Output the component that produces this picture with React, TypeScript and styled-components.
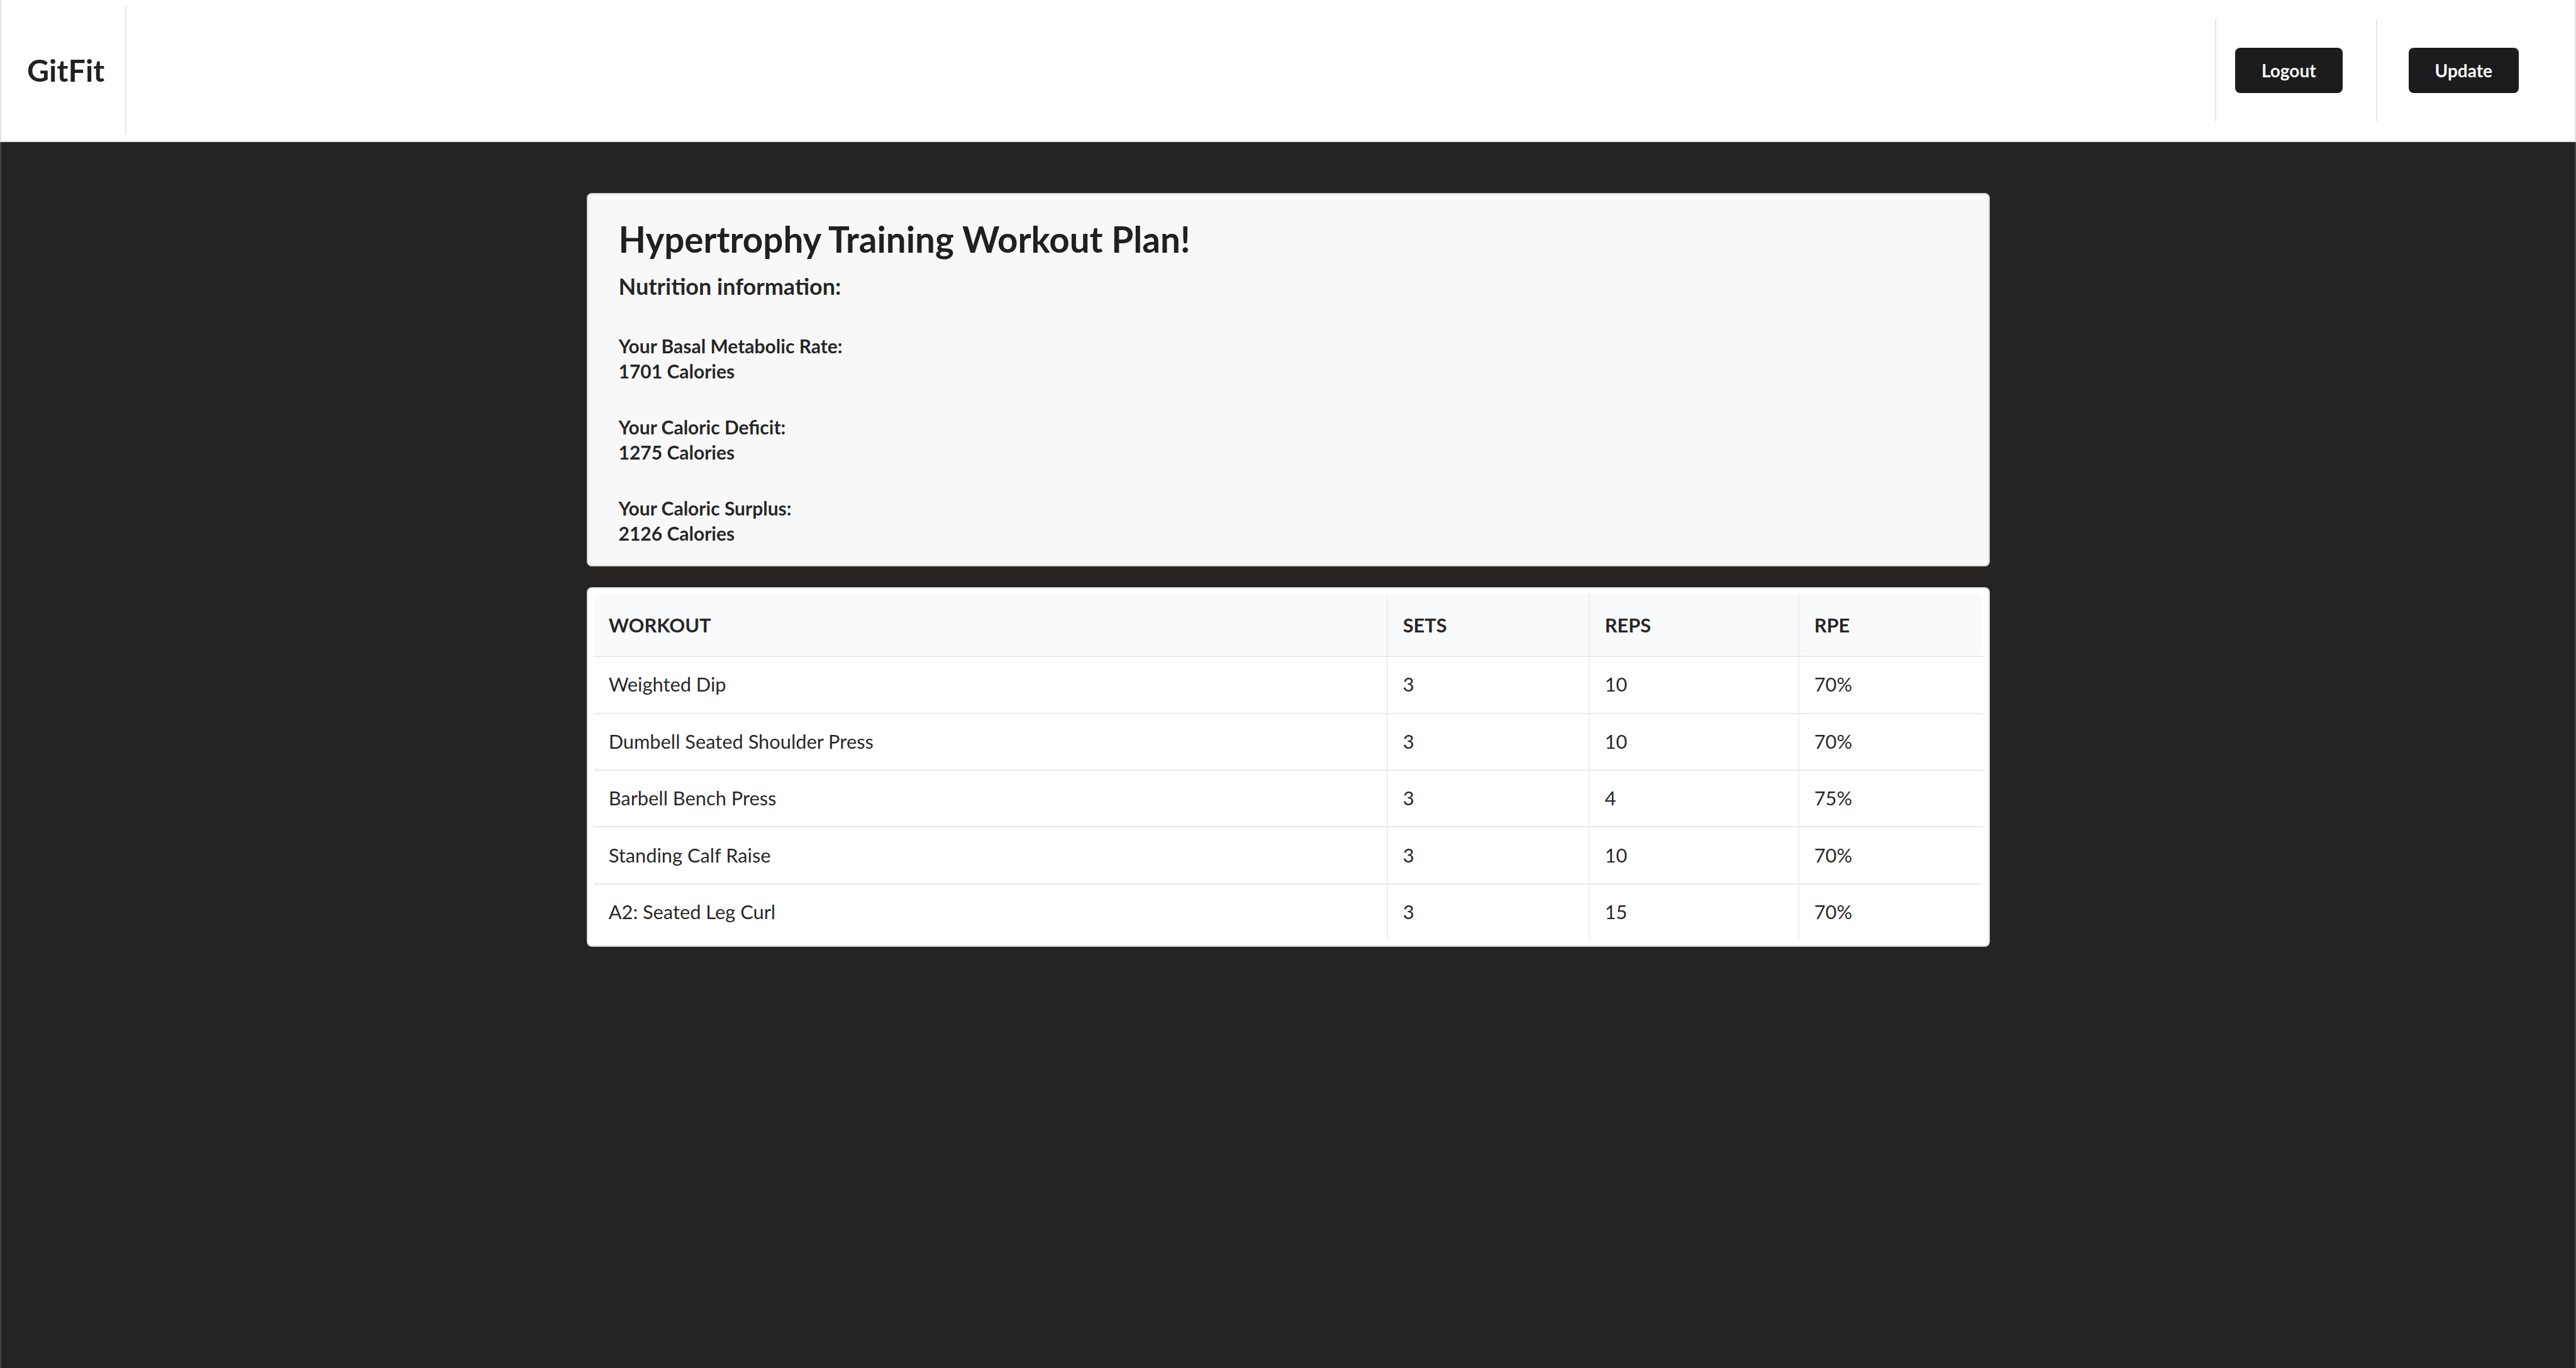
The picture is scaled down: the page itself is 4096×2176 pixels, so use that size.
import React from 'react';
import styled, { createGlobalStyle } from 'styled-components';

const GlobalStyle = createGlobalStyle`
  * {
    box-sizing: border-box;
  }
  html,
  body {
    margin: 0;
    padding: 0;
  }
  body {
    font-family: Lato, 'Helvetica Neue', Arial, Helvetica, sans-serif;
    font-size: 28px;
    line-height: 40px;
    color: rgba(0, 0, 0, 0.87);
    background: #252422;
  }
`;

const Page = styled.div`
  min-height: 2176px;
  display: flex;
  flex-direction: column;
  background: #252422;
`;

const Menu = styled.header`
  display: flex;
  align-items: stretch;
  height: 226px;
  background: #fff;
  border: 2px solid #e3e3e3;
  border-top: none;
`;

const Brand = styled.div`
  display: flex;
  align-items: center;
  width: 199px;
  margin: 10px 0 11px;
  padding-left: 41px;
  border-right: 2px solid #e6e6e6;
  font-size: 48.5px;
  font-weight: 700;
  line-height: 1;
  color: rgba(0, 0, 0, 0.87);
`;

const Spacer = styled.div`
  flex: 1;
`;

const MenuItem = styled.div<{ $left: number; $right: number }>`
  display: flex;
  align-items: center;
  margin: 30px 0 31px;
  padding: 0 ${p => p.$right}px 0 ${p => p.$left}px;
  border-left: 2px solid #e6e6e6;
`;

const Button = styled.button`
  height: 72px;
  padding: 0 42px;
  border: 0;
  border-radius: 8px;
  background: #1b1c1d;
  color: #fff;
  font-family: inherit;
  font-size: 28px;
  font-weight: 700;
  line-height: 1;
  cursor: pointer;
`;

const Main = styled.main`
  flex: 1;
  display: flex;
  flex-direction: column;
  align-items: center;
  gap: 33px;
  padding-top: 81px;
  border-left: 2px solid #474747;
  border-right: 2px solid #474747;
`;

const InfoCard = styled.section`
  width: 2231px;
  padding: 35px 49px 31px;
  background: #f8f8f8;
  border: 2px solid #d4d4d5;
  border-radius: 8px;
`;

const Title = styled.h1`
  margin: 0;
  font-size: 56.5px;
  line-height: 72px;
  font-weight: 700;
`;

const Subtitle = styled.h3`
  margin: 16px 0 0;
  font-size: 36px;
  line-height: 46px;
  font-weight: 700;
`;

const Stats = styled.div`
  display: flex;
  flex-direction: column;
  gap: 49px;
  margin-top: 52px;
`;

const Stat = styled.p`
  margin: 0;
  font-size: 30px;
  font-weight: 700;
`;

const TableCard = styled.section`
  width: 2231px;
  padding: 10px 9px 9px;
  background: #fff;
  border: 2px solid #dcdcdc;
  border-radius: 8px;
`;

const Table = styled.table`
  width: 100%;
  table-layout: fixed;
  border-collapse: separate;
  border-spacing: 0;
  font-size: 30.8px;
  line-height: 40px;
`;

const Th = styled.th<{ $width?: number }>`
  width: ${p => (p.$width ? `${p.$width}px` : 'auto')};
  padding: 28.6px 24.2px;
  text-align: left;
  font-weight: 700;
  background: #f9fafb;
  border-bottom: 2px solid #e8e8e9;
  border-left: 2px solid #eeeeef;

  &:first-child {
    border-left: none;
    border-top-left-radius: 8px;
  }
  &:last-child {
    border-top-right-radius: 8px;
  }
`;

const Td = styled.td`
  padding: 24.2px;
  border-top: 2px solid #e8e8e9;
  border-left: 2px solid #eeeeef;

  &:first-child {
    border-left: none;
  }
  tr:first-child > & {
    border-top: none;
  }
`;

const workouts = [
  { name: 'Weighted Dip', sets: 3, reps: 10, rpe: '70%' },
  { name: 'Dumbell Seated Shoulder Press', sets: 3, reps: 10, rpe: '70%' },
  { name: 'Barbell Bench Press', sets: 3, reps: 4, rpe: '75%' },
  { name: 'Standing Calf Raise', sets: 3, reps: 10, rpe: '70%' },
  { name: 'A2: Seated Leg Curl', sets: 3, reps: 15, rpe: '70%' },
];

const nutrition = [
  { label: 'Your Basal Metabolic Rate:', value: '1701 Calories' },
  { label: 'Your Caloric Deficit:', value: '1275 Calories' },
  { label: 'Your Caloric Surplus:', value: '2126 Calories' },
];

const App = () => {
  return (
    <Page>
      <GlobalStyle />
      <Menu>
        <Brand>GitFit</Brand>
        <Spacer />
        <MenuItem $left={30} $right={53}>
          <Button type="button">Logout</Button>
        </MenuItem>
        <MenuItem $left={50} $right={89}>
          <Button type="button">Update</Button>
        </MenuItem>
      </Menu>

      <Main>
        <InfoCard>
          <Title>Hypertrophy Training Workout Plan!</Title>
          <Subtitle>Nutrition information:</Subtitle>
          <Stats>
            {nutrition.map(item => (
              <Stat key={item.label}>
                {item.label}
                <br />
                {item.value}
              </Stat>
            ))}
          </Stats>
        </InfoCard>

        <TableCard>
          <Table>
            <thead>
              <tr>
                <Th $width={1261}>WORKOUT</Th>
                <Th $width={321}>SETS</Th>
                <Th $width={333}>REPS</Th>
                <Th>RPE</Th>
              </tr>
            </thead>
            <tbody>
              {workouts.map(w => (
                <tr key={w.name}>
                  <Td>{w.name}</Td>
                  <Td>{w.sets}</Td>
                  <Td>{w.reps}</Td>
                  <Td>{w.rpe}</Td>
                </tr>
              ))}
            </tbody>
          </Table>
        </TableCard>
      </Main>
    </Page>
  );
};

export default App;
